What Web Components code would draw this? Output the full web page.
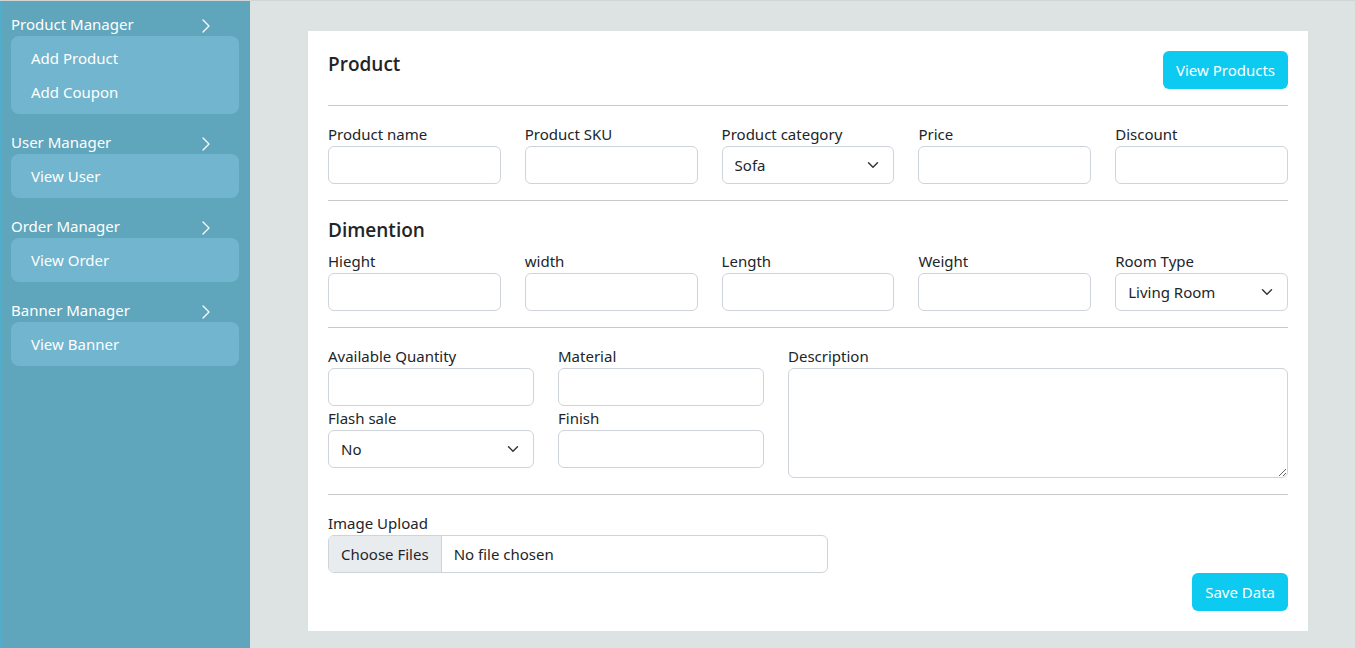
<!DOCTYPE html>
<html lang="en">
<head>
<meta charset="utf-8">
<meta name="viewport" content="width=device-width, initial-scale=1">
<title>Product Manager</title>
<style>
  body { margin: 0; font: 15px/24px "Noto Sans", "Open Sans", sans-serif; color: #212529; background: #dde2e2; }
</style>
</head>
<body>
<admin-app>
  <side-bar slot="side">
    <nav-group heading="Product Manager">
      <nav-link href="#add-product">Add Product</nav-link>
      <nav-link href="#add-coupon">Add Coupon</nav-link>
    </nav-group>
    <nav-group heading="User Manager"><nav-link href="#users">View User</nav-link></nav-group>
    <nav-group heading="Order Manager"><nav-link href="#orders">View Order</nav-link></nav-group>
    <nav-group heading="Banner Manager"><nav-link href="#banners">View Banner</nav-link></nav-group>
  </side-bar>
  <product-form></product-form>
</admin-app>

<template id="t-admin-app">
  <style>
    :host { display: grid; grid-template-columns: 250px minmax(0, 1fr); min-height: 100vh; box-sizing: border-box; border-top: 1px solid #d0d5d5; }
    main { padding: 30px 47px 17px 58px; }
  </style>
  <slot name="side"></slot>
  <main><slot></slot></main>
</template>

<template id="t-side-bar">
  <style>
    :host { display: block; background: #5fa5bc; border: solid #4bafcd; border-width: 0 0 0 1px; color: #fff; }
    nav { display: flex; flex-direction: column; gap: 16px; padding: 11px 11px 11px 10px; }
  </style>
  <nav><slot></slot></nav>
</template>

<template id="t-nav-group">
  <style>
    :host { display: block; }
    button { display: flex; justify-content: space-between; align-items: center; width: 100%; padding: 0 25px 0 0; border: 0; background: none; color: inherit; font: inherit; text-align: left; }
    svg { width: 16px; height: 16px; margin-top: 3px; }
    .panel { padding: 5px 20px; border-radius: 8px; background: #71b5ce; }
  </style>
  <button type="button" aria-expanded="true"><span></span>
    <svg viewBox="0 0 16 16" fill="none" stroke="currentColor" stroke-width="1.3" stroke-linecap="round" stroke-linejoin="round" aria-hidden="true"><path d="M5 2l6 6-6 6"/></svg>
  </button>
  <div class="panel"><slot></slot></div>
</template>

<template id="t-nav-link">
  <style>
    :host { display: block; }
    a { display: block; padding: 5px 0; color: #fff; text-decoration: none; }
  </style>
  <a><slot></slot></a>
</template>

<template id="t-form-field">
  <style>
    :host { display: block; min-width: 0; }
    label { display: block; }
    input, select, textarea { display: block; box-sizing: border-box; width: 100%; margin: 0; padding: 6px 12px; border: 1px solid #ced4da; border-radius: 6px; background: #fff; color: inherit; font: inherit; }
    input, select { height: 38px; }
    textarea { height: 110px; resize: vertical; }
    select { appearance: none; padding-right: 36px; background: #fff url("data:image/svg+xml,%3Csvg xmlns='http://www.w3.org/2000/svg' viewBox='0 0 16 16'%3E%3Cpath fill='none' stroke='%23343a40' stroke-linecap='round' stroke-linejoin='round' stroke-width='2' d='m2 5 6 6 6-6'/%3E%3C/svg%3E") no-repeat right 12px center / 16px 12px; }
    input[type=file] { overflow: hidden; }
    input::file-selector-button { margin: -6px 12px -6px -12px; padding: 6px 12px; border: 0 solid #ced4da; border-right-width: 1px; border-radius: 0; background: #e9ecef; color: inherit; font: inherit; }
  </style>
  <label for="control"></label>
</template>

<template id="t-action-button">
  <style>
    :host { display: block; }
    button { display: block; height: 38px; padding: 0 13px; border: 0; border-radius: 6px; background: #0dcaf0; color: #fff; font: inherit; white-space: nowrap; }
  </style>
  <button type="button"><slot></slot></button>
</template>

<template id="t-product-form">
  <style>
    :host { display: block; padding: 20px; background: #fff; }
    header, footer { display: flex; justify-content: space-between; align-items: flex-start; }
    footer { justify-content: flex-end; }
    h2 { margin: 0 0 6px; font: 600 19px/26px "Open Sans", sans-serif; }
    hr { margin: 16px 0; border: 0; border-top: 1px solid #c8c9ca; }
    .five, .mixed { display: grid; column-gap: 24px; grid-template-columns: repeat(5, minmax(0, 1fr)); }
    .mixed { grid-template-columns: repeat(2, minmax(0, 1fr)) minmax(0, 500px); grid-template-rows: auto 1fr; align-items: start; }
    .tall { grid-column: 3; grid-row: 1 / 3; }
    .upload { max-width: 500px; }
  </style>
  <header><h2>Product</h2><action-button>View Products</action-button></header>
  <hr>
  <section class="five">
    <form-field label="Product name"></form-field>
    <form-field label="Product SKU"></form-field>
    <form-field label="Product category" type="select" value="Sofa"></form-field>
    <form-field label="Price"></form-field>
    <form-field label="Discount"></form-field>
  </section>
  <hr>
  <h2>Dimention</h2>
  <section class="five">
    <form-field label="Hieght"></form-field>
    <form-field label="width"></form-field>
    <form-field label="Length"></form-field>
    <form-field label="Weight"></form-field>
    <form-field label="Room Type" type="select" value="Living Room"></form-field>
  </section>
  <hr>
  <section class="mixed">
    <form-field label="Available Quantity"></form-field>
    <form-field label="Material"></form-field>
    <form-field class="tall" label="Description" type="textarea"></form-field>
    <form-field label="Flash sale" type="select" value="No"></form-field>
    <form-field label="Finish"></form-field>
  </section>
  <hr>
  <form-field class="upload" label="Image Upload" type="file"></form-field>
  <footer><action-button>Save Data</action-button></footer>
</template>

<script>
  class Base extends HTMLElement {
    constructor() {
      super();
      const template = document.getElementById("t-" + this.localName);
      this.attachShadow({ mode: "open" }).append(template.content.cloneNode(true));
    }
  }
  class NavGroup extends Base {
    connectedCallback() {
      const button = this.shadowRoot.querySelector("button");
      const panel = this.shadowRoot.querySelector(".panel");
      button.querySelector("span").textContent = this.getAttribute("heading");
      button.onclick = () => {
        panel.hidden = !panel.hidden;
        button.setAttribute("aria-expanded", String(!panel.hidden));
      };
    }
  }
  class NavLink extends Base {
    connectedCallback() {
      this.shadowRoot.querySelector("a").href = this.getAttribute("href");
    }
  }
  class FormField extends Base {
    connectedCallback() {
      if (this.shadowRoot.getElementById("control")) return;
      const type = this.getAttribute("type") || "text";
      const tag = type === "select" || type === "textarea" ? type : "input";
      const control = document.createElement(tag);
      control.id = "control";
      if (tag === "input") control.type = type;
      if (type === "file") control.multiple = true;
      if (type === "select") control.add(new Option(this.getAttribute("value")));
      this.shadowRoot.querySelector("label").textContent = this.getAttribute("label");
      this.shadowRoot.append(control);
    }
  }
  customElements.define("nav-link", NavLink);
  customElements.define("nav-group", NavGroup);
  customElements.define("side-bar", class extends Base {});
  customElements.define("form-field", FormField);
  customElements.define("action-button", class extends Base {});
  customElements.define("product-form", class extends Base {});
  customElements.define("admin-app", class extends Base {});
</script>
</body>
</html>
